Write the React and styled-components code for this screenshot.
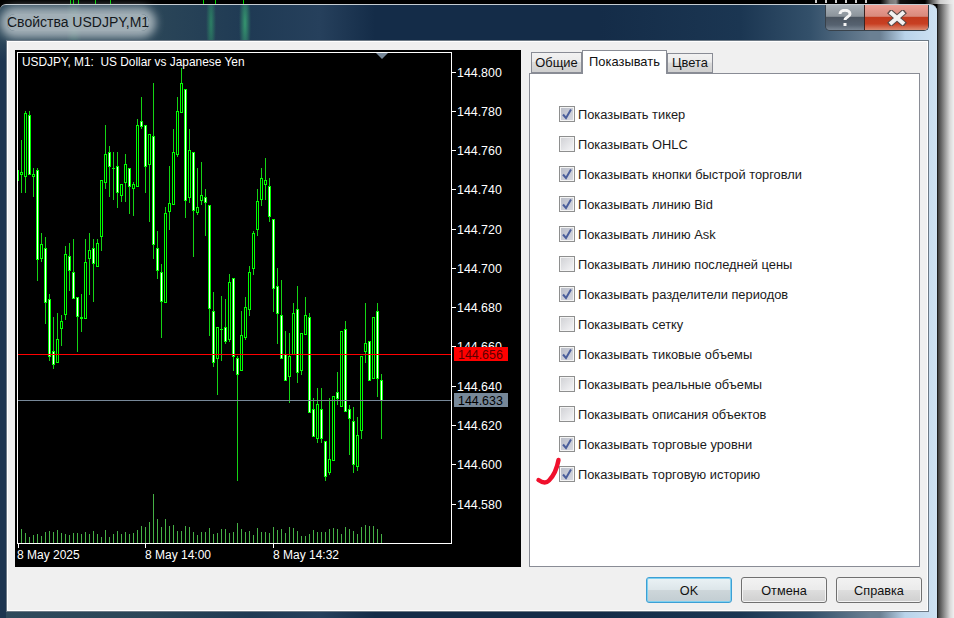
import React from 'react';
import styled, { createGlobalStyle } from 'styled-components';

const GlobalStyle = createGlobalStyle`
  html, body {
    margin: 0;
    padding: 0;
    background: #000;
  }
  body {
    font-family: "Liberation Sans", Arial, sans-serif;
  }
`;

const Desktop = styled.div`
  width: 954px;
  height: 618px;
  overflow: hidden;
  display: flex;
  flex-direction: column;
  background: linear-gradient(90deg, #000 0, #000 880px, #777 890px, #888 896px, #111 900px, #000 925px, #ccc 940px, #eee 954px);
`;

const TopStrip = styled.svg`
  display: block;
  width: 954px;
  height: 4px;
  flex: none;
`;

const WindowRow = styled.div`
  display: flex;
  flex: 1;
  background: linear-gradient(90deg, #000 0, #000 937px, #3d3d3d 938px, #8b8b8b 944px, #d8d8d8 950px, #f0f0f0 954px);
`;

const Window = styled.div`
  position: relative;
  width: 937px;
  box-sizing: border-box;
  padding: 0 8px 6px 6px;
  display: flex;
  flex-direction: column;
  border-top: 1px solid #c4ccd2;
  border-radius: 6px 7px 0 0;
  background:
    linear-gradient(180deg, transparent 30px, #1d3550 56px) left top / 6px 100% no-repeat,
    linear-gradient(90deg, transparent 880px, #b9d3ea 905px, #cfe2f3 937px),
    radial-gradient(ellipse 5px 44px at 211px 18px, rgba(50, 170, 110, 0.6), transparent),
    radial-gradient(ellipse 6px 44px at 245px 18px, rgba(60, 180, 120, 0.75), transparent),
    radial-gradient(ellipse 8px 40px at 74px 18px, rgba(70, 160, 120, 0.35), transparent),
    linear-gradient(90deg, #2f4a5c 0, #2b4658 150px, #1f3a54 250px, #26405c 320px, #142c48 375px, #142c48 600px, #1b3652 740px, #33506a 810px, #6b8093 870px);
`;

const TitleBar = styled.div`
  height: 35px;
  flex: none;
  display: flex;
  justify-content: space-between;
  align-items: flex-start;
`;

const TitleText = styled.div`
  margin: 9px 0 0 1px;
  height: 17px;
  line-height: 17px;
  font-size: 14px;
  color: #14181c;
  background: rgba(190, 200, 205, 0.8);
  box-shadow: 0 0 9px 7px rgba(190, 200, 205, 0.8);
  border-radius: 8px;
`;

const CaptionButtons = styled.div`
  display: flex;
  height: 25px;
  border: 1px solid #38414a;
  border-top: 0;
  border-radius: 0 0 5px 5px;
  overflow: hidden;
`;

const CaptionButton = styled.div`
  width: ${(p) => p.$width}px;
  display: flex;
  align-items: center;
  justify-content: center;
  background: ${(p) =>
    p.$close
      ? 'linear-gradient(180deg, #eea096 0, #d88a7c 45%, #c23a1e 50%, #c83f22 75%, #dd8a70 100%)'
      : 'linear-gradient(180deg, #a9b1b8 0, #8c949b 45%, #4c5661 50%, #566270 80%, #7a8794 100%)'};
  border-left: ${(p) => (p.$close ? '1px solid #3c2320' : '0')};
`;

const Client = styled.div`
  flex: 1;
  min-height: 0;
  background: #f0f0f0;
  border: 1px solid #6d7a86;
  box-shadow: inset 0 0 0 1px #ffffff;
  display: flex;
  flex-direction: column;
  padding: 9px 6px 0 8px;
  box-sizing: border-box;
`;

const Content = styled.div`
  display: flex;
  gap: 8px;
  height: 517px;
  flex: none;
`;

const ChartPanel = styled.svg`
  display: block;
  width: 506px;
  height: 517px;
  flex: none;
  background: #000;
  font-family: "Liberation Sans", Arial, sans-serif;
`;

const TabsColumn = styled.div`
  width: 391px;
  display: flex;
  flex-direction: column;
  flex: none;
`;

const TabRow = styled.div`
  height: 23px;
  flex: none;
  display: flex;
  align-items: flex-end;
  padding-left: 2px;
`;

const Tab = styled.div`
  position: relative;
  box-sizing: border-box;
  width: ${(p) => p.$width}px;
  height: ${(p) => (p.$active ? 24 : p.$short ? 20 : 21)}px;
  margin-bottom: ${(p) => (p.$active ? -1 : 0)}px;
  z-index: ${(p) => (p.$active ? 1 : 0)};
  border: 1px solid #898c95;
  border-bottom: ${(p) => (p.$active ? '0' : '1px solid #898c95')};
  background: ${(p) => (p.$active ? '#fff' : 'linear-gradient(180deg, #f2f2f2 0, #ebebeb 45%, #dcdcdc 50%, #cfcfcf 100%)')};
  font-size: 12.9px;
  line-height: ${(p) => (p.$active ? 21 : p.$short ? 18 : 20)}px;
  text-align: center;
  color: #111;
`;

const TabPage = styled.div`
  flex: 1;
  background: #fff;
  border: 1px solid #898c95;
  padding: 25px 0 0 29px;
  box-sizing: border-box;
`;

const Row = styled.div`
  height: 30px;
  display: flex;
  align-items: center;
  gap: 3px;
  font-size: 12.85px;
  color: #1a1a1a;
`;

const Box = styled.div`
  width: 16px;
  height: 16px;
  box-sizing: border-box;
  border: 1px solid #8e8f8f;
  box-shadow: inset 0 0 0 1px #f4f4f4;
  background: ${(p) =>
    p.$checked
      ? 'linear-gradient(135deg, #b9bdc8 0, #d8dae2 100%)'
      : 'linear-gradient(135deg, #cfd0d4 0, #f6f6f8 100%)'};
  display: flex;
  align-items: center;
  justify-content: center;
`;

const Footer = styled.div`
  flex: 1;
  display: flex;
  justify-content: flex-end;
  gap: 9px;
  padding-top: 10px;
  box-sizing: border-box;
`;

const Button = styled.div`
  width: 86px;
  height: 26px;
  box-sizing: border-box;
  border: 1px solid ${(p) => (p.$primary ? '#3c9fd4' : '#707070')};
  border-radius: 3px;
  box-shadow: inset 0 0 0 1px ${(p) => (p.$primary ? '#7fd0f0' : '#f4f4f4')};
  background: ${(p) =>
    p.$primary
      ? 'linear-gradient(180deg, #eaf2f5 0, #dde6ea 48%, #cdd6da 52%, #c2cdd2 100%)'
      : 'linear-gradient(180deg, #f2f2f2 0, #ebebeb 48%, #dddddd 52%, #cfcfcf 100%)'};
  font-size: 12.7px;
  line-height: 26px;
  text-align: center;
  color: #111;
`;

const Scribble = styled.svg`
  position: absolute;
  left: 530px;
  top: 448px;
  width: 36px;
  height: 36px;
  overflow: visible;
  filter: blur(0.5px);
`;

// x = 21 + 4 * k, each: hi, lo, bodyTop, bodyBottom, filled
const candles = [
  [140, 193, 172, 175, 0], [111, 193, 113, 177, 0], [111, 175, 115, 175, 1], [168, 197, 174, 177, 0],
  [168, 281, 170, 260, 1], [233, 262, 244, 259, 0], [237, 324, 248, 303, 1], [294, 361, 299, 357, 1],
  [317, 369, 351, 365, 1], [313, 363, 339, 363, 0], [315, 346, 321, 329, 0], [246, 320, 254, 315, 0],
  [243, 291, 256, 271, 1], [239, 299, 272, 299, 1], [297, 352, 297, 317, 1], [294, 332, 317, 319, 0],
  [239, 319, 262, 319, 0], [233, 295, 250, 259, 0], [239, 302, 248, 264, 1], [239, 267, 243, 267, 0],
  [180, 251, 180, 237, 0], [125, 189, 154, 183, 0], [146, 197, 152, 167, 1], [152, 200, 168, 169, 0],
  [152, 208, 166, 193, 1], [184, 202, 184, 196, 0], [154, 202, 164, 183, 0], [168, 214, 168, 187, 1],
  [182, 216, 184, 189, 0], [119, 187, 125, 187, 0], [97, 129, 121, 127, 1], [125, 193, 125, 167, 1],
  [134, 222, 134, 165, 0], [83, 259, 136, 245, 1], [231, 279, 248, 271, 1], [264, 338, 272, 302, 1],
  [207, 303, 213, 303, 0], [166, 230, 203, 212, 0], [129, 205, 152, 205, 0], [97, 157, 111, 155, 0],
  [68, 113, 83, 113, 0], [89, 218, 89, 201, 1], [129, 203, 150, 198, 0], [152, 257, 152, 211, 1],
  [168, 215, 207, 213, 0], [162, 205, 195, 201, 0], [189, 236, 197, 203, 1], [205, 336, 205, 309, 1],
  [292, 367, 311, 363, 1], [327, 395, 327, 359, 0], [296, 361, 329, 330, 0], [299, 344, 327, 342, 1],
  [274, 342, 282, 340, 0], [278, 371, 278, 357, 1], [356, 481, 358, 375, 1], [311, 371, 335, 371, 0],
  [297, 340, 307, 338, 0], [266, 316, 272, 310, 0], [231, 275, 233, 269, 0], [189, 236, 201, 230, 0],
  [168, 206, 178, 200, 0], [158, 200, 180, 185, 0], [178, 222, 186, 217, 1], [219, 312, 219, 289, 1],
  [268, 344, 286, 314, 1], [280, 359, 315, 359, 1], [331, 381, 354, 381, 1], [333, 403, 356, 377, 0],
  [303, 355, 313, 355, 0], [286, 383, 309, 373, 1], [333, 375, 333, 371, 0], [297, 335, 315, 335, 0],
  [313, 413, 317, 413, 1], [398, 437, 409, 437, 1], [388, 443, 404, 439, 0], [388, 443, 409, 439, 1],
  [441, 481, 441, 477, 1], [398, 475, 459, 473, 0], [396, 461, 396, 461, 0], [372, 405, 392, 399, 1],
  [331, 407, 331, 407, 0], [321, 412, 329, 412, 1], [405, 455, 409, 419, 1], [407, 473, 421, 465, 1],
  [417, 471, 435, 467, 0], [356, 439, 356, 431, 0], [303, 363, 343, 352, 0], [341, 381, 341, 381, 1],
  [317, 379, 317, 379, 0], [303, 397, 311, 379, 1], [374, 439, 380, 401, 1],
];

// y of the top of each volume bar, same x as the candles
const volumes = [
  529, 533, 537, 535, 534, 536, 532, 531, 532, 530, 533, 534, 535, 533, 533, 534, 532, 534, 531, 534, 537, 530, 537,
  534, 531, 534, 532, 534, 533, 530, 526, 527, 522, 494, 519, 527, 519, 526, 525, 531, 531, 526, 527, 532, 535, 532,
  532, 528, 534, 533, 529, 529, 533, 532, 523, 529, 532, 531, 535, 528, 532, 532, 533, 527, 530, 529, 533, 527, 528,
  531, 536, 536, 534, 530, 532, 532, 532, 529, 528, 529, 534, 527, 529, 531, 534, 527, 525, 526, 526, 529, 534,
];

const prices = [
  [72, '144.800'], [111, '144.780'], [150, '144.760'], [189, '144.740'], [229, '144.720'], [268, '144.700'],
  [307, '144.680'], [346, '144.660'], [386, '144.640'], [425, '144.620'], [464, '144.600'], [504, '144.580'],
];

const dates = [
  [18, 17, '8 May 2025'],
  [145, 145, '8 May 14:00'],
  [273, 273, '8 May 14:32'],
];

const options = [
  ['Показывать тикер', true],
  ['Показывать OHLC', false],
  ['Показывать кнопки быстрой торговли', true],
  ['Показывать линию Bid', true],
  ['Показывать линию Ask', true],
  ['Показывать линию последней цены', false],
  ['Показывать разделители периодов', true],
  ['Показывать сетку', false],
  ['Показывать тиковые объемы', true],
  ['Показывать реальные объемы', false],
  ['Показывать описания объектов', false],
  ['Показывать торговые уровни', true],
  ['Показывать торговую историю', true],
];

const Candle = ({ x, data }) => {
  const [hi, lo, top, bottom, filled] = data;
  return (
    <g>
      <rect x={x} y={hi} width="1" height={lo - hi} fill="#14d414" />
      <rect x={x - 1} y={top} width="3" height={Math.max(bottom - top, 1)} fill="#00ff00" />
      {bottom - top > 2 && (
        <rect x={x} y={top + 1} width="1" height={bottom - top - 2} fill={filled ? '#ffffff' : '#000000'} />
      )}
    </g>
  );
};

const Chart = () => (
  <ChartPanel viewBox="15 50 506 517">
    <g shapeRendering="crispEdges">
      {volumes.map((y, k) => (
        <rect key={k} x={21 + 4 * k} y={y} width="1" height={543 - y} fill="#45b045" />
      ))}
      {candles.map((c, k) => (
        <Candle key={k} x={21 + 4 * k} data={c} />
      ))}
      <rect x="18" y="170" width="1" height="11" fill="#00ff00" />
      <rect x="18" y="354" width="434" height="1" fill="#ff0000" />
      <rect x="18" y="400" width="434" height="1" fill="#778899" />
      <rect x="17" y="52" width="435" height="1" fill="#fff" />
      <rect x="17" y="52" width="1" height="492" fill="#fff" />
      <rect x="451" y="52" width="1" height="492" fill="#fff" />
      <rect x="17" y="543" width="435" height="1" fill="#fff" />
      {prices.map(([y]) => (
        <rect key={y} x="452" y={y} width="4" height="1" fill="#fff" />
      ))}
      {dates.map(([x]) => (
        <rect key={x} x={x} y="544" width="1" height="4" fill="#fff" />
      ))}
    </g>
    <polygon points="376,53 388,53 382,59" fill="#778899" />
    <text x="22" y="65.5" fontSize="11.9" fill="#fff">USDJPY, M1:{'\u00a0\u00a0'}US Dollar vs Japanese Yen</text>
    {prices.map(([y, label]) => (
      <text key={y} x="457" y={y + 5} fontSize="12.4" fill="#fff">{label}</text>
    ))}
    {dates.map(([, x, label]) => (
      <text key={x} x={x} y="559" fontSize="12" fill="#fff">{label}</text>
    ))}
    <rect x="454" y="347" width="54" height="14" fill="#ff0000" />
    <text x="458" y="359" fontSize="12.4" fill="#5a0000">144.656</text>
    <rect x="454" y="393" width="54" height="14" fill="#778899" />
    <text x="458" y="405" fontSize="12.4" fill="#000">144.633</text>
  </ChartPanel>
);

const CheckMark = () => (
  <svg width="12" height="12" viewBox="0 0 12 12">
    <path d="M2 6.5 L5 10 L10 1.5" fill="none" stroke="#4a5f9c" strokeWidth="2" />
  </svg>
);

export default function App() {
  return (
    <Desktop>
      <GlobalStyle />
      <TopStrip viewBox="0 0 954 4">
        {[70, 73, 78, 95, 110, 203, 215, 243].map((x) => (
          <rect key={x} x={x} y="0" width="1" height="4" fill="#00d000" />
        ))}
        {[815, 825, 835, 845, 855, 865].map((x) => (
          <rect key={x} x={x} y="0" width="2" height="3" fill="#cccccc" />
        ))}
      </TopStrip>
      <WindowRow>
        <Window>
          <TitleBar>
            <TitleText>Свойства USDJPY,M1</TitleText>
            <CaptionButtons>
              <CaptionButton $width={38}>
                <svg width="14" height="18" viewBox="0 0 14 18">
                  <path
                    d="M2 5 C2 0 12 0 12 5 C12 8 7 8 7 11 M7 14 V17"
                    fill="none"
                    stroke="#f4f4f4"
                    strokeWidth="3"
                  />
                </svg>
              </CaptionButton>
              <CaptionButton $width={63} $close>
                <svg width="20" height="16" viewBox="0 0 20 16">
                  <path d="M2 1 L18 15 M18 1 L2 15" stroke="#5a4a48" strokeWidth="6" />
                  <path d="M3 2 L17 14 M17 2 L3 14" stroke="#f2f2f2" strokeWidth="4" />
                </svg>
              </CaptionButton>
            </CaptionButtons>
          </TitleBar>
          <Client>
            <Content>
              <Chart />
              <TabsColumn>
                <TabRow>
                  <Tab $width={51}>Общие</Tab>
                  <Tab $width={85} $active>Показывать</Tab>
                  <Tab $width={46} $short>Цвета</Tab>
                </TabRow>
                <TabPage>
                  {options.map(([label, checked]) => (
                    <Row key={label}>
                      <Box $checked={checked}>{checked && <CheckMark />}</Box>
                      {label}
                    </Row>
                  ))}
                </TabPage>
              </TabsColumn>
            </Content>
            <Footer>
              <Button $primary>OK</Button>
              <Button>Отмена</Button>
              <Button>Справка</Button>
            </Footer>
          </Client>
          <Scribble viewBox="530 448 36 36">
            <path
              d="M538.5 475 C542 477.5 546 478.5 549 475.5 C553.5 471 556.5 466 558.5 455"
              fill="none"
              stroke="#f0102c"
              strokeWidth="4.4"
              strokeLinecap="round"
            />
          </Scribble>
        </Window>
      </WindowRow>
    </Desktop>
  );
}
